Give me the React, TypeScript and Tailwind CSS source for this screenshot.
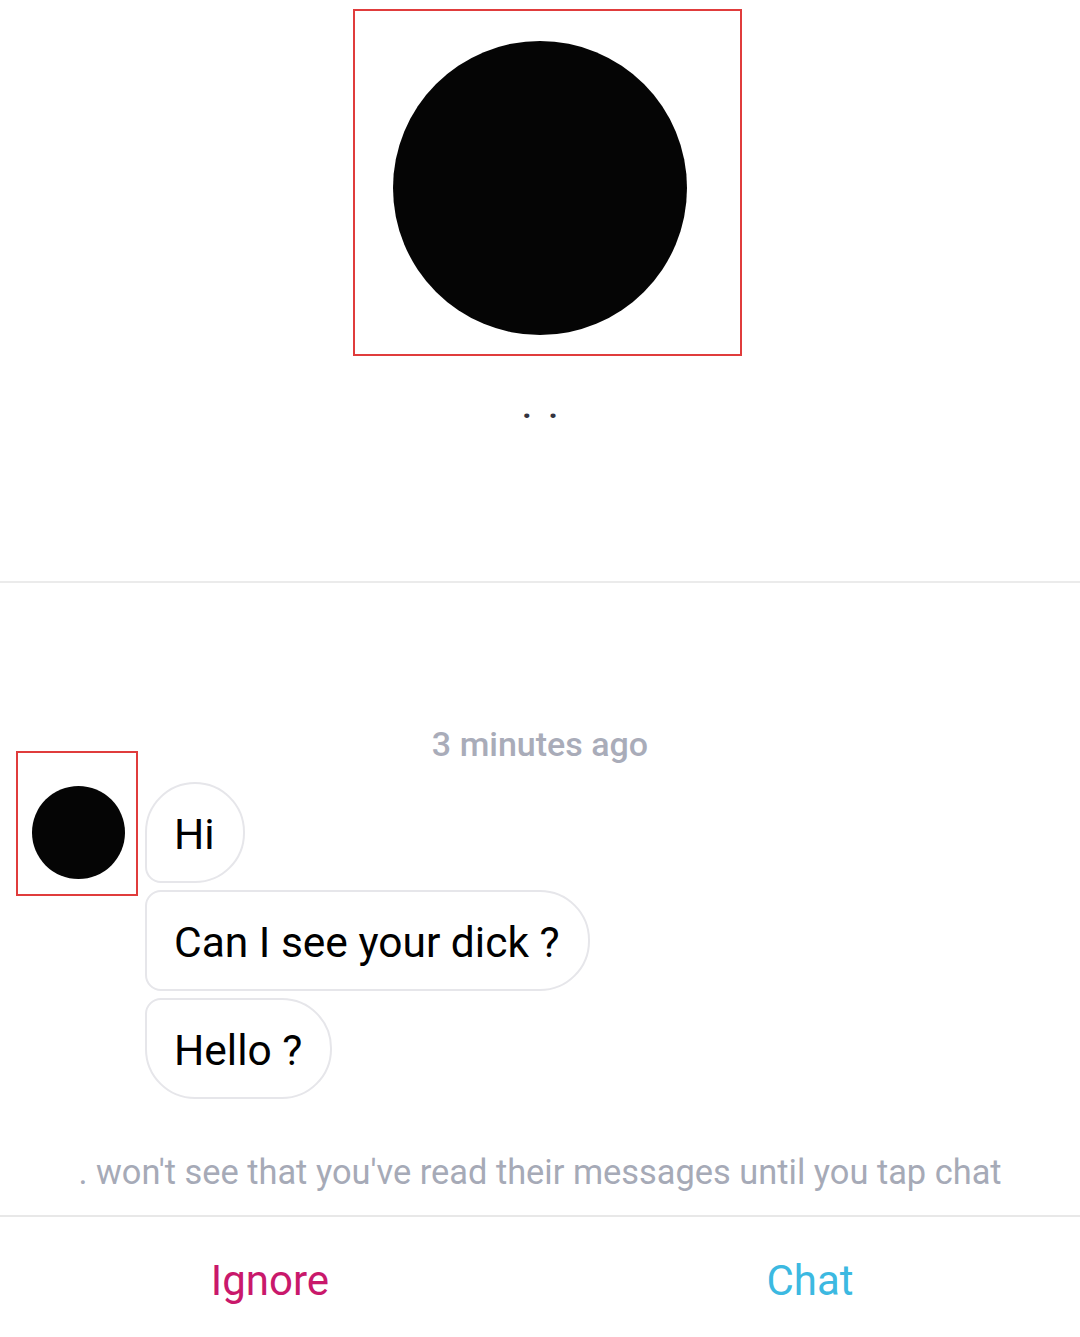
import React from "react";

const font = { fontFamily: "Roboto, 'Noto Sans', sans-serif" };

function Bubble({ text, shape }: { text: string; shape: string }) {
  return (
    <div
      className={`flex h-[101px] items-center border-2 border-[#e6e6ea] bg-white pl-[27px] pr-[28px] pt-[5px] text-[42.5px] leading-none text-black ${shape}`}
    >
      {text}
    </div>
  );
}

export default function App() {
  return (
    <div className="flex h-[1337px] w-[1080px] flex-col bg-white" style={font}>
      <div className="flex flex-col items-center pt-[9px]">
        <div className="ml-[14px] flex h-[347px] w-[389px] border-2 border-[#e03c3c] pl-[38px] pt-[30px]">
          <div className="h-[294px] w-[294px] rounded-full bg-[#050505]" />
        </div>
        <div className="mt-[36px] flex h-[30px] items-center gap-[17px] text-[32px] font-bold leading-none text-[#34343f]">
          <span>.</span>
          <span>.</span>
        </div>
      </div>

      <div className="mt-[159px] h-[2px] bg-[#ebebeb]" />

      <div className="mt-[148px] h-[27px] text-center text-[34px] font-medium leading-[27px] text-[#a9acb9]">
        3 minutes ago
      </div>

      <div className="-mt-[7px] flex items-start pl-[16px]">
        <div className="h-[145px] w-[122px] border-2 border-[#e03c3c] pl-[14px] pt-[33px]">
          <div className="h-[93px] w-[93px] rounded-full bg-[#050505]" />
        </div>
        <div className="ml-[7px] mt-[31px] flex flex-col items-start gap-[7px]">
          <Bubble text="Hi" shape="rounded-tl-[50px] rounded-tr-[50px] rounded-br-[50px] rounded-bl-[16px]" />
          <Bubble text="Can I see your dick ?" shape="rounded-tl-[16px] rounded-tr-[50px] rounded-br-[50px] rounded-bl-[16px]" />
          <Bubble text="Hello ?" shape="rounded-tl-[16px] rounded-tr-[50px] rounded-br-[50px] rounded-bl-[50px]" />
        </div>
      </div>

      <div className="mt-[53px] text-center text-[34.4px] leading-[40px] text-[#a6aab7]">
        . won't see that you've read their messages until you tap chat
      </div>

      <div className="mt-[23px] h-[2px] bg-[#e8e8e8]" />

      <div className="grid h-[120px] grid-cols-2 pt-[6px]">
        <div className="flex items-center justify-center text-[42px] text-[#c9186b]">Ignore</div>
        <div className="flex items-center justify-center text-[42px] text-[#3cb9e1]">Chat</div>
      </div>
    </div>
  );
}
